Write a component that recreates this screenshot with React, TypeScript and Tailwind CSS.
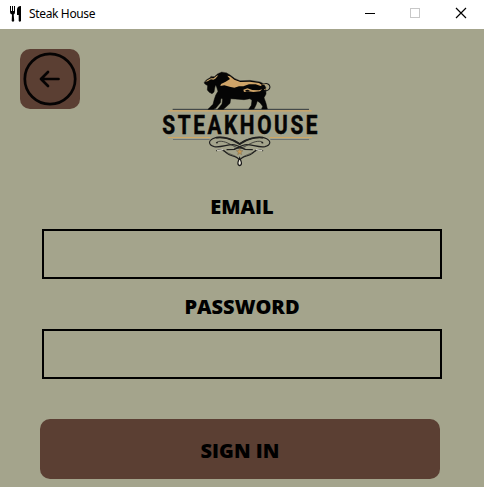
import React from "react";

function Logo() {
  return (
    <svg className="block h-[102px] w-[160px]" viewBox="160 68 160 102" fill="none">
      <g transform="translate(155 65) scale(.33333)">
        <path d="M53 133H462" stroke="#30373b" strokeWidth="3" />
        <path d="M39 137.5H470" stroke="#d0a662" strokeWidth="4" />
      </g>
      {/* horse */}
      <g transform="translate(200 68) scale(.33333)">
        <path
          d="M13 43L20 35L28 31L33 25L43 26L53 17L65 12L78 14L90 21L103 31L120 38L150 37L178 41L190 47L197 58L198 78L192 89L198 106L202 123H185L188 115L180 104L172 99L168 111L162 123L146 124L154 112L156 97L150 92L132 95L106 93L92 92L90 106L77 118L70 124H53L66 108L68 93L63 91L61 104L47 121L40 124H24L39 109L43 94L47 82L54 70L50 57L47 50L44 60L42 72L36 77L28 73L22 66L23 53L14 47Z"
          fill="#050505"
          stroke="#050505"
          strokeWidth="1.5"
          strokeLinejoin="round"
        />
        <path d="M190 48Q208 43 210 57Q209 69 191 69" stroke="#151515" strokeWidth="3.2" />
        <path d="M187 49Q204 47 204 57Q202 64 192 65" stroke="#c6a46d" strokeWidth="2" />
        <path d="M15 41L23 36L33 31L41 31L50 23L55 22L46 32L40 35L33 34L23 40Z" fill="#c9a66d" />
        <path d="M82 23L90 25L103 35L121 42L149 41L177 45L186 51L182 54L167 49L147 49L130 55L117 55L103 59L89 56L73 52L61 54L63 48L77 41L90 33Z" fill="#cfa468" />
        <path d="M130 65L142 61L157 66L176 67L187 64L180 70L160 72L145 70L132 72Z" fill="#cfa468" />
        <path d="M135 67L143 65L150 68L140 71Z" fill="#090909" />
        <path d="M27 28L43 24L53 16L65 11L78 13M104 31L121 37L151 36L180 41" stroke="#d1cbb3" strokeWidth=".8" />
      </g>
      <text
        transform="translate(162.3 134) scale(.8 1)"
        fill="#050505"
        stroke="#050505"
        strokeWidth=".5"
        fontSize="26"
        fontWeight="700"
        textLength="194"
        lengthAdjust="spacing"
        className="font-['Roboto',sans-serif]"
      >STEAKHOUSE</text>
      <g transform="translate(155 105) scale(.33333)">
        <path d="M39 97.5H166M344 97.5H471" stroke="#d0a662" strokeWidth="3.5" />
        <path d="M54 103.5H164M346 103.5H462" stroke="#6c7373" strokeWidth="3" />
        {[false, true].map((mirrored) => (
          <g key={String(mirrored)} transform={mirrored ? "translate(508 0) scale(-1 1)" : undefined} stroke="#20201f" strokeLinecap="round">
            <path d="M254 117C231 99 191 92 173 101C158 109 162 121 178 125C197 128 216 119 231 119C244 118 254 125 269 133L292 134" strokeWidth="3.5" />
            <path d="M254 117C231 100 203 95 185 98" strokeWidth="5.5" />
            <path d="M184 113C191 105 208 109 222 116C238 124 249 132 270 130" strokeWidth="2.2" />
            <circle cx="186" cy="113" r="2" fill="#20201f" />
            <path d="M185 137C202 128 207 138 216 145C228 156 245 150 254 166" strokeWidth="3.5" />
            <path d="M200 135L221 145C235 151 246 153 254 165" strokeWidth="1.5" />
            <path d="M188 136L204 134" stroke="#d2d0c5" strokeWidth="4" />
          </g>
        ))}
        <path d="M254 130L257 137H264L258 142L260 149L254 145L248 149L250 142L244 137H251Z" fill="#c69a55" stroke="#68543b" />
        <path d="M254 158C249 169 245 180 254 182C263 180 259 169 254 158Z" fill="#eeeadd" stroke="#161616" strokeWidth="3.5" />
      </g>
    </svg>
  );
}

function Field({ label, type, id }: { label: string; type: string; id: string }) {
  return (
    <div className="flex h-[100px] w-[400px] flex-col">
      <label htmlFor={id} className="flex h-[44px] items-center justify-center text-[20px] leading-[44px] font-extrabold">
        {label}
      </label>
      <input id={id} type={type} className="h-[50px] w-[400px] border-2 border-black bg-transparent px-3 outline-none" />
    </div>
  );
}

export default function App() {
  return (
    <div className="flex h-[487px] w-[484px] flex-col overflow-hidden bg-[#a4a48c] font-['Open_Sans','Noto_Sans',sans-serif] text-black">
      <header className="flex h-[29px] shrink-0 items-center bg-white">
        <svg className="-mt-[2px] ml-[9px] h-[18px] w-[14px]" viewBox="0 0 14 18" fill="black">
          <path d="M1 1H2V6H3V1H4V6H5V1H6V7Q6 9 4.7 9.5L5.2 16Q4 17.5 2.7 16L3 9.5Q1 9 1 7ZM12 1V16Q10.7 17.5 9.7 16V10H8V5Q8 1 12 1Z" />
        </svg>
        <span className="-mt-[2px] ml-[6px] h-[18px] w-[66px] font-['Noto_Sans',sans-serif] text-[12px] leading-[17px] tracking-[-0.35px] whitespace-nowrap">Steak House</span>
        <svg className="ml-auto h-[29px] w-[134px]" viewBox="0 0 134 29" fill="none" shapeRendering="crispEdges">
          <path d="M15 13.5H25" stroke="black" />
          <path d="M60.5 8.5H69.5V17.5H60.5Z" stroke="#c8c8c8" />
          <path d="M106 8L116 18M116 8L106 18" stroke="black" strokeWidth="1.2" shapeRendering="auto" />
        </svg>
      </header>
      <main className="flex grow flex-col">
        <div className="flex h-[156px] shrink-0 items-start">
          <button aria-label="Back" className="mt-[20px] ml-[20px] h-[60px] w-[60px] rounded-[10px] bg-[#5b3f33]">
            <svg className="h-[60px] w-[60px]" viewBox="0 0 60 60" fill="none" stroke="#050303" strokeWidth="2.7" strokeLinecap="round" strokeLinejoin="round">
              <circle cx="30" cy="30" r="25.2" />
              <path d="M38.5 30H21M28 23L21 30L28 37" />
            </svg>
          </button>
          <div className="mt-[39px] ml-[80px]"><Logo /></div>
        </div>
        <form className="flex flex-col pl-[42px]" onSubmit={(event) => event.preventDefault()}>
          <Field label="EMAIL" type="email" id="email" />
          <Field label="PASSWORD" type="password" id="password" />
          <button className="mt-[34px] -ml-[2px] h-[60px] w-[400px] rounded-[10px] bg-[#5b3f33] pt-[4px] text-[20px] leading-[44px] font-extrabold">SIGN IN</button>
        </form>
      </main>
    </div>
  );
}
